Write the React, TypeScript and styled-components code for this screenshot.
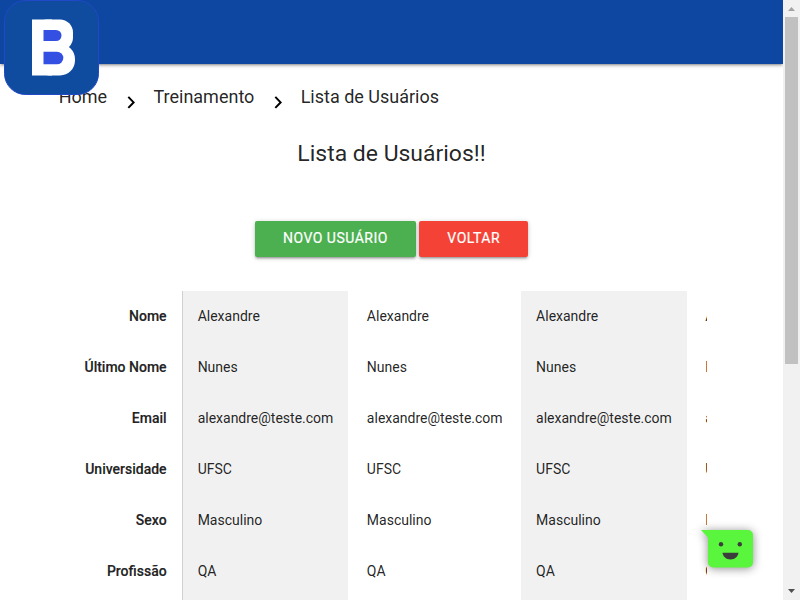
import React from 'react';
import styled, { createGlobalStyle } from 'styled-components';

const Global = createGlobalStyle`
  * { box-sizing: border-box; }
  html { font-size: 14px; }
  body {
    margin: 0;
    overflow: hidden;
    background: #fff;
    color: rgba(0, 0, 0, 0.87);
    font-family: Roboto, "Liberation Sans", sans-serif;
    line-height: 1.5;
  }
`;

const Screen = styled.div`
  display: flex;
  width: 800px;
  height: 600px;
  overflow: hidden;
`;

const Page = styled.div`
  position: relative;
  width: 783px;
  height: 600px;
  overflow: hidden;
`;

const NavBar = styled.nav`
  height: 64px;
  background: #0d47a1;
  box-shadow: 0 2px 2px 0 rgba(0, 0, 0, 0.14), 0 3px 1px -2px rgba(0, 0, 0, 0.12),
    0 1px 5px 0 rgba(0, 0, 0, 0.2);
`;

const Logo = styled.svg`
  position: absolute;
  left: 4px;
  top: 0;
  width: 95px;
  height: 95px;
`;

const Container = styled.main`
  width: 85%;
  margin: 0 auto;
`;

const Breadcrumbs = styled.div`
  display: flex;
  height: 64px;
  font-size: 18px;
  line-height: 66px;
`;

const Crumb = styled.a`
  white-space: nowrap;
`;

const Chevron = styled.svg`
  width: 24px;
  height: 24px;
  margin: 26px 10.5px 0 11.800px;
  flex: none;
`;

const Title = styled.h5`
  margin: 13px 0 0;
  font-size: 22.96px;
  font-weight: 400;
  line-height: 25.2px;
  text-align: center;
`;

const Actions = styled.div`
  display: flex;
  justify-content: center;
  gap: 3.5px;
  margin-top: 55px;
`;

const Button = styled.button<{ $color: string }>`
  height: 36px;
  padding: 0 28px 2px;
  border: 0;
  border-radius: 2px;
  background: ${(p) => p.$color};
  color: #fff;
  font: 400 14px/34px Roboto, "Liberation Sans", sans-serif;
  -webkit-text-stroke: 0.2px #fff;
  letter-spacing: 0.5px;
  text-transform: uppercase;
  box-shadow: 0 2px 2px 0 rgba(0, 0, 0, 0.14), 0 3px 1px -2px rgba(0, 0, 0, 0.12),
    0 1px 5px 0 rgba(0, 0, 0, 0.2);
`;

const Table = styled.div`
  display: flex;
  width: 638px;
  margin: 34px 0 0 10.75px;
  overflow: hidden;
`;

const Labels = styled.div`
  flex: none;
  border-right: 1px solid #d0d0d0;
  text-align: right;
`;

const Label = styled.div`
  padding: 15px;
  height: 51px;
  font-weight: 500;
  -webkit-text-stroke: 0.2px rgba(0, 0, 0, 0.87);
  line-height: 21px;
  white-space: nowrap;
`;

const Users = styled.div`
  display: flex;
  gap: 3.47px;
`;

const User = styled.div<{ $striped: boolean }>`
  flex: none;
  padding-bottom: 15px;
  background: ${(p) => (p.$striped ? '#f1f1f1' : 'transparent')};
`;

const Cell = styled.div`
  padding: 15px;
  line-height: 21px;
`;

const Chat = styled.svg`
  position: absolute;
  left: 690px;
  top: 515px;
  width: 80px;
  height: 70px;
  overflow: visible;
`;

const Bubble = styled.path`
  filter: drop-shadow(0 1px 5px rgba(0, 0, 0, 0.45));
`;

const ScrollBar = styled.div`
  display: flex;
  flex-direction: column;
  align-items: center;
  width: 17px;
  height: 600px;
  background: #f1f1f1;
`;

const ScrollArrow = styled.svg`
  display: block;
  width: 17px;
  height: 17px;
  flex: none;
`;

const Thumb = styled.div`
  width: 13px;
  height: 347px;
  margin-bottom: auto;
  background: #c1c1c1;
`;

const labels = ['Nome', 'Último Nome', 'Email', 'Universidade', 'Sexo', 'Profissão'];
const person = ['Alexandre', 'Nunes', 'alexandre@teste.com', 'UFSC', 'Masculino', 'QA'];
const users = [person, person, person, person];

const Separator = () => (
  <Chevron viewBox="0 0 24 24">
    <path d="M9.3 6.9 14.6 12.400l-5.3 5.5" fill="none" stroke="#000" strokeWidth="2" />
  </Chevron>
);

export default function App() {
  return (
    <>
      <Global />
      <Screen>
        <Page>
          <NavBar />
          <Container>
            <Breadcrumbs>
              <Crumb>Home</Crumb>
              <Separator />
              <Crumb>Treinamento</Crumb>
              <Separator />
              <Crumb>Lista de Usuários</Crumb>
            </Breadcrumbs>
            <Title>Lista de Usuários!!</Title>
            <Actions>
              <Button $color="#4caf50">Novo Usuário</Button>
              <Button $color="#f44336">Voltar</Button>
            </Actions>
            <Table>
              <Labels>
                {labels.map((l) => (
                  <Label key={l}>{l}</Label>
                ))}
              </Labels>
              <Users>
                {users.map((u, i) => (
                  <User key={i} $striped={i % 2 === 0}>
                    {u.map((v) => (
                      <Cell key={v}>{v}</Cell>
                    ))}
                  </User>
                ))}
              </Users>
            </Table>
          </Container>
          <Logo viewBox="0 0 95 95">
            <rect x=".5" y=".5" width="94" height="94" rx="21" fill="#0f4ca0" stroke="#2148c6" />
            <g fill="#fff">
              <rect x="28" y="19.5" width="20" height="56" />
              <rect x="30" y="19.5" width="39" height="31" rx="13" />
              <rect x="30" y="44" width="41" height="31.5" rx="15" />
            </g>
            <g fill="#3350e3">
              <path d="M39.500 30h12.500a5.500 5.500 0 0 1 0 11H39.500z" />
              <path d="M39.500 51.700h13.500a6.300 6.300 0 0 1 0 12.600H39.500z" />
            </g>
          </Logo>
          <Chat viewBox="0 0 80 70">
            <Bubble
              d="M11 15h47a5 5 0 0 1 5 5v27.500a5 5 0 0 1-5 5H23a5 5 0 0 1-5-5V22.500z"
              fill="#5af53d"
            />
            <g fill="#3c3c3c">
              <circle cx="31" cy="29.300" r="2.200" />
              <circle cx="49.800" cy="29.300" r="2.200" />
              <path d="M32.500 37.700h16c-.6 4-3.800 6.700-8 6.700s-7.400-2.700-8-6.700z" />
            </g>
          </Chat>
        </Page>
        <ScrollBar>
          <ScrollArrow viewBox="0 0 17 17">
            <path d="M5 11h7L8.500 7z" fill="#a3a3a3" />
          </ScrollArrow>
          <Thumb />
          <ScrollArrow viewBox="0 0 17 17">
            <path d="M5 6h7l-3.500 4z" fill="#505050" />
          </ScrollArrow>
        </ScrollBar>
      </Screen>
    </>
  );
}
